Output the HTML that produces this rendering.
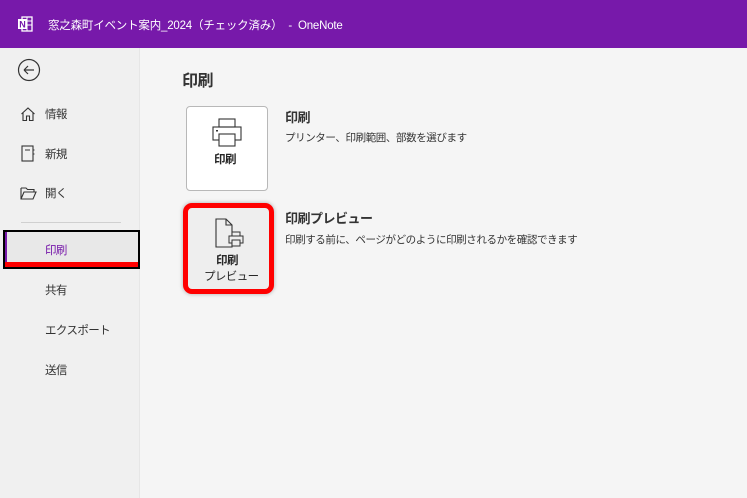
<!DOCTYPE html>
<html><head><meta charset="utf-8"><style>
*{margin:0;padding:0;box-sizing:border-box}
body{width:747px;height:498px;overflow:hidden;background:#f5f5f5;font-family:"Liberation Sans","Noto Sans CJK JP",sans-serif;color:#262626;position:relative}
.abs{position:absolute}
.title{left:0;top:0;width:747px;height:48px;background:#7719aa;color:#fff;font-size:11.5px;letter-spacing:-0.2px}
.side{left:0;top:48px;width:140px;height:450px;background:#f0f0f0;border-right:1px solid #e6e6e6}
.item{font-size:11.5px;color:#333;white-space:nowrap;letter-spacing:-0.6px}
</style></head><body>
<div class="abs title">
 <svg class="abs" style="left:17px;top:16px" width="16" height="16" viewBox="0 0 16 16"><rect x="5" y="1" width="10" height="14" fill="none" stroke="#fff" stroke-width="1.3"/><line x1="10" y1="1" x2="10" y2="15" stroke="#fff"/><line x1="10" y1="5" x2="15" y2="5" stroke="#fff"/><line x1="10" y1="9" x2="15" y2="9" stroke="#fff"/><rect x="1" y="3" width="9" height="10" fill="#fff"/><text x="2.3" y="11.5" font-size="9" font-weight="bold" fill="#7719aa" font-family="Liberation Sans">N</text></svg>
 <div class="abs" style="left:48px;top:17px">窓之森町イベント案内_2024（チェック済み） &nbsp;- &nbsp;OneNote</div>
</div>
<div class="abs side"></div>
<svg class="abs" style="left:17px;top:58px" width="24" height="24" viewBox="0 0 24 24"><circle cx="12" cy="12" r="10.5" fill="none" stroke="#333" stroke-width="1.2"/><path d="M7 12H17M7 12L11 8M7 12L11 16" fill="none" stroke="#333" stroke-width="1.2"/></svg>
<svg class="abs" style="left:20px;top:106px" width="16" height="16" viewBox="0 0 16 16"><path d="M1.5 8L8 2l6.5 6M3 7v7.5h3.5V10h3v4.5H13V7" fill="none" stroke="#333" stroke-width="1.1"/></svg>
<div class="abs item" style="left:45px;top:106px">情報</div>
<svg class="abs" style="left:21px;top:145px" width="14" height="17" viewBox="0 0 14 17"><rect x="1" y="1" width="11" height="15" fill="none" stroke="#333" stroke-width="1.1"/><line x1="4" y1="5" x2="9" y2="5" stroke="#333"/><line x1="12" y1="5" x2="13.5" y2="5" stroke="#333"/><line x1="12" y1="9" x2="13.5" y2="9" stroke="#333"/></svg>
<div class="abs item" style="left:45px;top:146px">新規</div>
<svg class="abs" style="left:20px;top:187px" width="17" height="13" viewBox="0 0 17 13"><path d="M1 1h5l1.5 1.5H14V5M1 1v11h12l3-7H4l-3 7" fill="none" stroke="#333" stroke-width="1.1"/></svg>
<div class="abs item" style="left:45px;top:185px">開く</div>
<div class="abs" style="left:21px;top:222px;width:100px;height:1px;background:#d0d0d0"></div>
<div class="abs" style="left:3px;top:230px;width:137px;height:39px;border:2px solid #000;background:#e8e8e8"></div>
<div class="abs" style="left:5px;top:232px;width:2px;height:30px;background:#7719aa"></div>
<div class="abs" style="left:5px;top:262px;width:133px;height:5px;background:#f00"></div>
<div class="abs item" style="left:45px;top:242px;color:#7719aa">印刷</div>
<div class="abs item" style="left:45px;top:282px">共有</div>
<div class="abs item" style="left:45px;top:322px">エクスポート</div>
<div class="abs item" style="left:45px;top:362px">送信</div>

<div class="abs" style="left:182px;top:67px;font-size:16px;font-weight:bold;color:#333;letter-spacing:-0.5px">印刷</div>
<div class="abs" style="left:186px;top:106px;width:82px;height:85px;background:#fff;border:1px solid #b8b8b8;border-radius:4px"></div>
<svg class="abs" style="left:212px;top:118px" width="30" height="30" viewBox="0 0 30 30"><rect x="7" y="1" width="16" height="8" fill="none" stroke="#333" stroke-width="1.1"/><rect x="1" y="9" width="28" height="13" fill="none" stroke="#333" stroke-width="1.1"/><rect x="7" y="16" width="16" height="12" fill="#fff" stroke="#333" stroke-width="1.1"/><rect x="4" y="12" width="2" height="1.5" fill="#333"/></svg>
<div class="abs" style="left:214px;top:151px;font-size:11.5px;font-weight:bold;letter-spacing:-0.5px">印刷</div>
<div class="abs" style="left:285px;top:107px;font-size:13px;font-weight:bold;color:#333;letter-spacing:-0.5px">印刷</div>
<div class="abs" style="left:285px;top:130px;font-size:10.5px;color:#333;letter-spacing:-0.4px">プリンター、印刷範囲、部数を選びます</div>

<div class="abs" style="left:183px;top:203px;width:91px;height:91px;border:5px solid #f00;border-radius:9px;background:#eee;box-shadow:0 0 4px rgba(0,0,0,.3)"></div>
<svg class="abs" style="left:215px;top:218px" width="30" height="32" viewBox="0 0 30 32"><path d="M1 1h10l6 6v22H1z" fill="none" stroke="#333" stroke-width="1.1"/><path d="M11 1v6h6" fill="none" stroke="#333" stroke-width="1.1"/><rect x="17" y="14" width="8" height="4" fill="#eee" stroke="#333"/><rect x="14" y="18" width="14" height="7" fill="#eee" stroke="#333"/><rect x="17" y="22" width="8" height="6" fill="#eee" stroke="#333"/></svg>
<div class="abs" style="left:216px;top:252px;font-size:11.5px;font-weight:bold;letter-spacing:-0.5px">印刷</div>
<div class="abs" style="left:204px;top:268px;font-size:11.5px;letter-spacing:-0.6px">プレビュー</div>
<div class="abs" style="left:285px;top:208px;font-size:13px;font-weight:bold;color:#333;letter-spacing:-0.5px">印刷プレビュー</div>
<div class="abs" style="left:285px;top:232px;font-size:10.5px;color:#333;letter-spacing:-0.4px">印刷する前に、ページがどのように印刷されるかを確認できます</div>
</body></html>
